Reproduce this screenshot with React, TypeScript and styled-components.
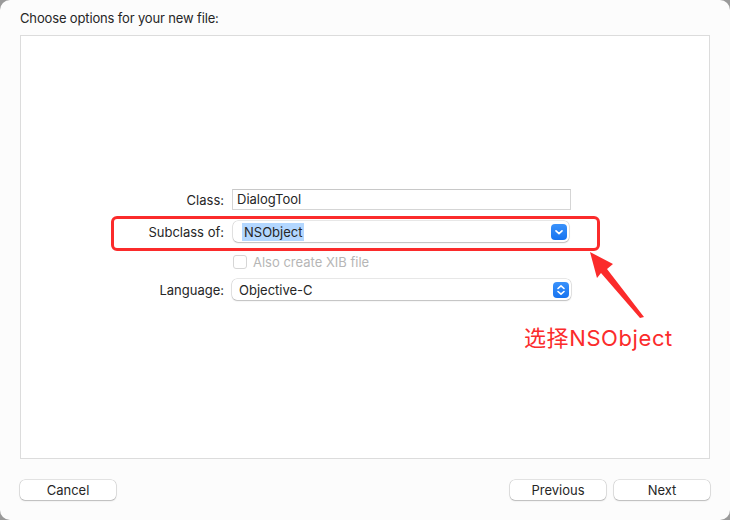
import React from "react";
import styled, { createGlobalStyle } from "styled-components";

const Global = createGlobalStyle`
  html, body { margin: 0; padding: 0; background: #9a9a9a; }
  body { font-family: "Inter", "Liberation Sans", sans-serif; font-size: 13px; color: #262626; }
`;

const Window = styled.div`
  position: relative;
  width: 730px;
  height: 520px;
  box-sizing: border-box;
  background: #fcfcfc;
  border-radius: 10px;
  padding: 10px 20px 0 20px;
  display: flex;
  flex-direction: column;
  overflow: hidden;
`;

const Title = styled.div`
  height: 16px;
  line-height: 16px;
  font-size: 13px;
  letter-spacing: -0.15px;
  color: #262626;
  margin-bottom: 9px;
`;

const Panel = styled.div`
  height: 424px;
  box-sizing: border-box;
  border: 1px solid #dcdcdc;
  background: #ffffff;
  padding-top: 153px;
`;

const Form = styled.div`
  display: grid;
  grid-template-columns: 180px 339px;
  column-gap: 8px;
  margin-left: 23px;
  align-items: center;
`;

const Label = styled.div<{ $mt?: number }>`
  text-align: right;
  font-size: 13px;
  color: #262626;
  margin-top: ${(p) => p.$mt ?? 0}px;
`;

const Cell = styled.div<{ $mt?: number }>`
  margin-top: ${(p) => p.$mt ?? 0}px;
`;

const TextField = styled.div`
  height: 21px;
  box-sizing: border-box;
  border: 1px solid #d5d5d5;
  border-top-color: #c8c8c8;
  background: #fff;
  padding-left: 4px;
  line-height: 19px;
  font-size: 13px;
  color: #262626;
`;

const Popup = styled.div<{ $w: number; $ml: number }>`
  height: 21px;
  width: ${(p) => p.$w}px;
  margin-left: ${(p) => p.$ml}px;
  box-sizing: border-box;
  border-radius: 5px;
  background: #fff;
  box-shadow: 0 0 0 0.5px rgba(0, 0, 0, 0.18), 0 1px 1.5px rgba(0, 0, 0, 0.18);
  display: flex;
  align-items: center;
  justify-content: space-between;
  padding: 0 2px 0 7px;
  font-size: 13px;
  color: #262626;
`;

const Selected = styled.span`
  background: #b3d7ff;
  padding: 1px 2px;
  margin-left: 2px;
  line-height: 16px;
`;

const Stepper = styled.span`
  width: 16px;
  height: 16px;
  border-radius: 4px;
  background: linear-gradient(#3a92fb, #1673f0);
  display: flex;
  align-items: center;
  justify-content: center;
`;

const CheckRow = styled.div`
  display: flex;
  align-items: center;
  gap: 6px;
  height: 16px;
  margin-top: 12px;
  margin-bottom: -2px;
  margin-left: 1px;
  color: #b6b6b6;
  font-size: 13px;
`;

const Box = styled.span`
  width: 12px;
  height: 12px;
  border: 1px solid #d6d6d6;
  border-radius: 3px;
  background: #fff;
`;

const Footer = styled.div`
  display: flex;
  align-items: center;
  margin-top: 21px;
  gap: 8px;
`;

const Spacer = styled.div`
  flex: 1;
`;

const Button = styled.div`
  width: 96px;
  height: 20px;
  border-radius: 5px;
  background: #fff;
  box-shadow: 0 0 0 0.5px rgba(0, 0, 0, 0.2), 0 1px 1.5px rgba(0, 0, 0, 0.18);
  display: flex;
  align-items: center;
  justify-content: center;
  font-size: 13px;
  color: #262626;
`;

const Highlight = styled.div`
  position: absolute;
  left: 111px;
  top: 216px;
  width: 489px;
  height: 35px;
  box-sizing: border-box;
  border: 3px solid #fb2b2b;
  border-radius: 6px;
  pointer-events: none;
`;

const ArrowSvg = styled.svg`
  position: absolute;
  left: 0;
  top: 0;
  pointer-events: none;
`;

const Note = styled.div`
  position: absolute;
  left: 524px;
  top: 323px;
  font-family: "Inter", "Noto Sans CJK SC", sans-serif;
  font-size: 22px;
  line-height: 30px;
  letter-spacing: 0.6px;
  color: #fb2b2b;
  white-space: nowrap;
`;

const Chevron = ({ up }: { up?: boolean }) =>
  up ? (
    <svg width="16" height="16" viewBox="0 0 16 16">
      <path d="M5 6.5 L8 3.8 L11 6.5" fill="none" stroke="#fff" strokeWidth="1.6" strokeLinecap="round" strokeLinejoin="round" />
      <path d="M5 9.5 L8 12.2 L11 9.5" fill="none" stroke="#fff" strokeWidth="1.6" strokeLinecap="round" strokeLinejoin="round" />
    </svg>
  ) : (
    <svg width="16" height="16" viewBox="0 0 16 16">
      <path d="M5 6.8 L8 9.6 L11 6.8" fill="none" stroke="#fff" strokeWidth="1.7" strokeLinecap="round" strokeLinejoin="round" />
    </svg>
  );

export default function App() {
  return (
    <>
      <Global />
      <Window>
        <Title>Choose options for your new file:</Title>
        <Panel>
          <Form>
            <Label>Class:</Label>
            <Cell>
              <TextField>DialogTool</TextField>
            </Cell>
            <Label $mt={11}>Subclass of:</Label>
            <Cell $mt={11}>
              <Popup $w={336} $ml={1}>
                <Selected>NSObject</Selected>
                <Stepper>
                  <Chevron />
                </Stepper>
              </Popup>
            </Cell>
            <div />
            <CheckRow>
              <Box />
              <span>Also create XIB file</span>
            </CheckRow>
            <Label $mt={11}>Language:</Label>
            <Cell $mt={11}>
              <Popup $w={339} $ml={0}>
                <span>Objective-C</span>
                <Stepper>
                  <Chevron up />
                </Stepper>
              </Popup>
            </Cell>
          </Form>
        </Panel>
        <Footer>
          <Button>Cancel</Button>
          <Spacer />
          <Button>Previous</Button>
          <Button>Next</Button>
        </Footer>
        <Highlight />
        <ArrowSvg width="730" height="520" viewBox="0 0 730 520">
          <polygon points="590,252 613,264 607,269 644,317 640,318 601,273 597,278" fill="#fb2b2b" />
        </ArrowSvg>
        <Note>选择NSObject</Note>
      </Window>
    </>
  );
}
